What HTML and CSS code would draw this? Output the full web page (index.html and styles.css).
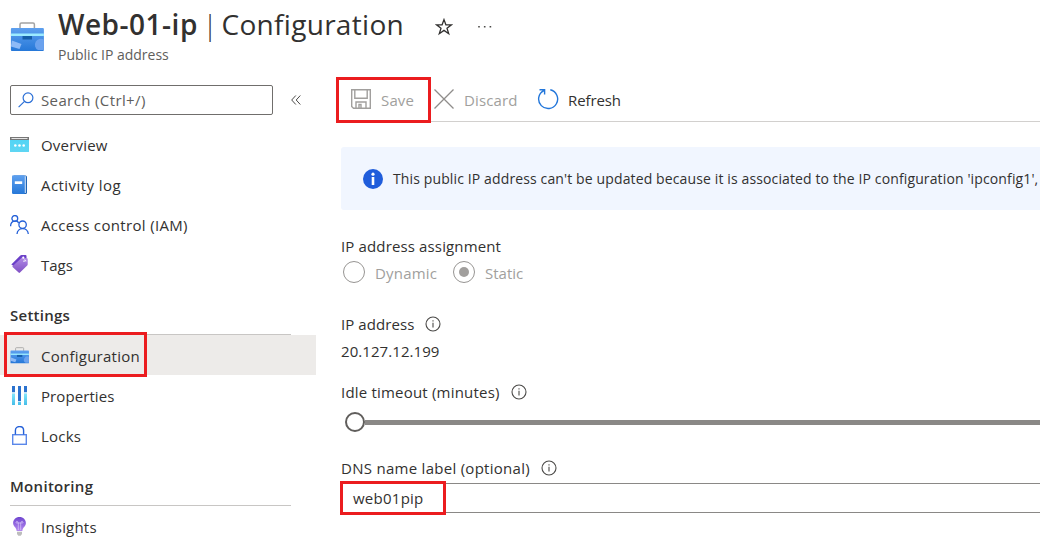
FILE: index.html
```html
<!DOCTYPE html>
<html lang="en">
<head>
<meta charset="utf-8">
<title>Web-01-ip | Configuration</title>
<link rel="stylesheet" href="styles.css">
</head>
<body>
<svg width="0" height="0" class="defs">
  <defs>
    <linearGradient id="blue" x1="0" y1="0" x2="0" y2="1"><stop offset="0" stop-color="#5ea0ef"/><stop offset="1" stop-color="#2678d8"/></linearGradient>
    <linearGradient id="cyan" x1="0" y1="0" x2="0" y2="1"><stop offset="0" stop-color="#50d4f5"/><stop offset="1" stop-color="#5fd6f3"/></linearGradient>
    <linearGradient id="violet" x1="0" y1="0" x2="0" y2="1"><stop offset="0" stop-color="#6f45cf"/><stop offset="1" stop-color="#b58af0"/></linearGradient>
    <linearGradient id="tag" x1="0" y1="0" x2="0" y2="1"><stop offset="0" stop-color="#b08ae6"/><stop offset="1" stop-color="#8050c4"/></linearGradient>
    <linearGradient id="bars" x1="0" y1="0" x2="0" y2="1"><stop offset="0" stop-color="#80e6fb"/><stop offset="1" stop-color="#45bde8"/></linearGradient>
    <symbol id="toolbox" viewBox="0 0 34 30">
      <path d="M10 7V2.400Q10 1 11.400 1H23Q24.400 1 24.400 2.400V7" fill="none" stroke="#a3a3a3" stroke-width="1.500"/>
      <rect x=".9" y="6" width="33" height="23" rx="1" fill="url(#blue)"/>
      <path d="M1.900 18.500L11.500 22L9.500 27L.9 24.500Z" fill="#8ebaf6"/>
      <path d="M33.900 17.500A6 6 0 0 0 28 28H33.900Z" fill="#6ba2ee"/>
      <rect x=".9" y="11.500" width="33" height="2.500" fill="#9cebff"/>
      <rect x="12.500" y="14" width="9.500" height="3.500" fill="#155ea8"/>
    </symbol>
    <symbol id="info" viewBox="0 0 16 16">
      <circle cx="8" cy="8" r="7" fill="none" stroke="#4b4a48" stroke-width="1.100"/>
      <path d="M8 6.700V11.500M8 4.300V5.400" stroke="#4b4a48" stroke-width="1.100"/>
    </symbol>
  </defs>
</svg>
<div class="page">
  <header class="header">
    <svg class="header-icon"><use href="#toolbox"/></svg>
    <div class="titles">
      <div class="title-row">
        <h1 class="title"><b class="name">Web-01-ip</b><span class="bar">|</span><span class="section">Configuration</span></h1>
        <svg class="star" viewBox="0 0 18 18"><path d="M9 1.600L10.900 6.800H16.500L12 10.200L13.700 15.700L9 12.400L4.300 15.700L6 10.200L1.500 6.800H7.100Z" fill="none" stroke="#323130" stroke-width="1.300"/></svg>
        <svg class="more" viewBox="0 0 16 4"><path d="M1.200 1H2.800V2.600H1.200ZM6.900 1H8.500V2.600H6.900ZM12.600 1H14.200V2.600H12.600Z" fill="#4b4a48"/></svg>
      </div>
      <div class="subtitle">Public IP address</div>
    </div>
  </header>
  <div class="body">
    <nav class="sidebar">
      <div class="search-row">
        <div class="search">
          <svg class="search-icon" viewBox="0 0 16 16"><circle cx="10" cy="5.800" r="4.900" fill="none" stroke="#2b6fd6" stroke-width="1.200"/><path d="M6.500 9.300L.6 15.200" stroke="#2b6fd6" stroke-width="1.200"/></svg>
          <span class="t-search">Search (Ctrl+/)</span>
        </div>
        <svg class="collapse" viewBox="0 0 10 10"><path d="M4.800 .5L.7 5L4.800 9.500M9.300 .5L5.200 5L9.300 9.500" fill="none" stroke="#4b4a48"/></svg>
      </div>
      <ul class="menu">
        <li class="item">
          <svg class="icon" viewBox="0 0 19 19"><rect y="2" width="19" height="15" rx=".6" fill="url(#cyan)"/><path d="M0 2H19V5H0Z" fill="#767676"/><path d="M1.500 3H17.500V4H1.500Z" fill="#e4e4e4"/><g fill="#fff"><circle cx="5.300" cy="10.500" r="1.300"/><circle cx="9.500" cy="10.500" r="1.300"/><circle cx="13.700" cy="10.500" r="1.300"/></g></svg>
          <span class="t-overview">Overview</span></li>
        <li class="item">
          <svg class="icon" viewBox="0 0 19 19"><path d="M4 .5H15.500Q17 .5 17 2V17.500Q17 19 15.500 19H4Z" fill="#1f64b5"/><path d="M4 1.200H15.800V18H4Z" fill="#dcecff"/><rect x="2" y=".3" width="12.800" height="18.700" rx="1.200" fill="url(#blue)"/><rect x="4.800" y="6.300" width="7.400" height="2.700" fill="#fff"/></svg>
          <span class="t-activity">Activity log</span></li>
        <li class="item">
          <svg class="icon" viewBox="0 0 19 19"><g fill="none" stroke="#2460d8" stroke-width="1.300"><circle cx="4.800" cy="3.500" r="2.900"/><path d="M.6 11.300C.6 4.900 7.800 4.900 8.500 8.200"/><circle cx="12.600" cy="9.700" r="3.700"/><path d="M7 19C7.400 11.900 17.900 11.900 18.300 19"/></g></svg>
          <span class="t-access">Access control (IAM)</span></li>
        <li class="item">
          <svg class="icon" viewBox="0 0 19 19"><path d="M1.300 9.500L10.300 .4Q10.800 0 11.500 0H15.500Q16.500 0 16.500 1V6L8 14Z" fill="#6a3fc8"/><path d="M2.700 11L12 2.500L17.700 3.500V9.200Q17.700 9.900 17.200 10.400L10 17.600Q9.300 18.300 8.600 17.600L2.600 12Q2 11.500 2.700 11Z" fill="url(#tag)"/><circle cx="13.300" cy="2.700" r="1.100" fill="#fff"/><path d="M14.200 7Q13.200 5.500 14.600 5Q16.300 5 15.900 6.500" fill="none" stroke="#fff"/></svg>
          <span class="t-tags">Tags</span></li>
      </ul>
      <h2 class="group"><span class="t-settings">Settings</span></h2>
      <ul class="menu settings">
        <li class="item selected"><svg class="icon"><use href="#toolbox"/></svg><span class="t-config">Configuration</span><i class="mark mark-config"></i></li>
        <li class="item">
          <svg class="icon" viewBox="0 0 19 19"><path d="M2 0H5V6H2ZM8 0H11V15H8ZM14 0H17V6H14Z" fill="#2b72ce"/><path d="M2 8H5V19H2ZM8 16H11V19H8ZM14 8H17V19H14Z" fill="url(#bars)"/><path d="M2 6H5V8H2ZM8 15H11V16H8ZM14 6H17V8H14Z" fill="#c0e6f8"/></svg>
          <span class="t-props">Properties</span></li>
        <li class="item">
          <svg class="icon" viewBox="0 0 19 19"><rect x="2.700" y="8.700" width="13.600" height="9.600" fill="#fff" stroke="#5b88ea" stroke-width="1.400"/><path d="M5.400 8.500V4.500C5.400-.8 13.600-.8 13.600 4.500V8.500" fill="none" stroke="#2460d8" stroke-width="1.400"/></svg>
          <span class="t-locks">Locks</span></li>
      </ul>
      <h2 class="group"><span class="t-monitor">Monitoring</span></h2>
      <ul class="menu">
        <li class="item">
          <svg class="icon" viewBox="0 0 19 19"><path d="M9.500 0C5.800 0 3.100 2.700 3.100 6.100C3.100 9.800 6.600 10.500 6.600 14H12.400C12.400 10.500 15.900 9.800 15.900 6.100C15.900 2.700 13.200 0 9.500 0Z" fill="url(#violet)"/><path d="M8.300 13V6H6.700Q5.700 6 5.900 5Q6.400 4 7.600 4.600L8.300 6H10.700L11.400 4.600Q12.600 4 13.100 5Q13.300 6 12.300 6H10.700V13" fill="none" stroke="#eadfff" stroke-opacity=".7" stroke-width=".8"/><path d="M7 14.800H12V17L10.700 18.700H8.300L7 17Z" fill="#bdbdbd"/></svg>
          <span class="t-insights">Insights</span></li>
      </ul>
    </nav>
    <main class="main">
      <div class="toolbar">
        <div class="tool save">
          <svg class="i-save" viewBox="0 0 20 20"><path d="M.7.7H19.300V19.300H2.500L.7 17.500ZM3.800 1V9.300H16.200V1M5 19V13H15V19M8 19V15.500H10V19" fill="none" stroke="#a19f9d" stroke-width="1.400"/></svg>
          <span class="t-save">Save</span><i class="mark mark-save"></i>
        </div>
        <div class="tool discard">
          <svg class="i-save" viewBox="0 0 20 20"><path d="M.5.5L19.500 19.500M19.500.5L.5 19.500" stroke="#8f8d8b" stroke-width="1.300"/></svg>
          <span class="t-discard">Discard</span>
        </div>
        <div class="tool refresh">
          <svg class="i-refresh" viewBox="0 0 22 22"><path d="M13.300 .8A9.500 9.500 0 1 1 6.800 1.600M2.500 .7H7.600V5.500" fill="none" stroke="#2276da" stroke-width="1.400"/></svg>
          <span class="t-refresh">Refresh</span>
        </div>
      </div>
      <div class="banner">
        <svg class="i-banner" viewBox="0 0 20 20"><circle cx="10" cy="10" r="10" fill="#205ddb"/><circle cx="10" cy="5.200" r="1.600" fill="#fff"/><path d="M8.700 8H11.300V16H8.700Z" fill="#fff"/></svg>
        <span class="t-banner">This public IP address can't be updated because it is associated to the IP configuration 'ipconfig1',</span>
      </div>
      <form class="form">
        <div class="line l-assign"><span class="t-assign">IP address assignment</span></div>
        <div class="radios">
          <i class="radio"></i><span class="t-dynamic">Dynamic</span>
          <i class="radio checked"></i><span class="t-static">Static</span>
        </div>
        <div class="line l-ip"><span class="t-ip">IP address</span><svg class="info"><use href="#info"/></svg></div>
        <div class="line l-value"><span class="t-value">20.127.12.199</span></div>
        <div class="line l-idle"><span class="t-idle">Idle timeout (minutes)</span><svg class="info"><use href="#info"/></svg></div>
        <div class="slider"><i class="thumb"></i><i class="track"></i></div>
        <div class="line l-dns"><span class="t-dns">DNS name label (optional)</span><svg class="info"><use href="#info"/></svg></div>
        <div class="input"><span class="t-input">web01pip</span><i class="mark mark-input"></i></div>
      </form>
    </main>
  </div>
</div>
</body>
</html>
```
FILE: styles.css
```css
* { box-sizing: border-box; }
body { margin: 0; background: #fff; color: #323130; font: 15px/20px "Open Sans", "Noto Sans", sans-serif; }
h1, h2, ul { margin: 0; padding: 0; font-weight: 400; list-style: none; }
svg { display: block; flex: none; }
span, b { white-space: nowrap; }
.defs { position: absolute; }
.page { width: 1040px; height: 546px; overflow: hidden; display: flex; flex-direction: column; }

.header { height: 77px; flex: none; display: flex; padding-left: 10px; }
.header-icon { width: 34px; height: 30px; margin-top: 22px; }
.titles { margin-left: 14px; }
.title-row { display: flex; height: 45px; }
.title { display: flex; width: 346px; font-size: 28px; line-height: 48px; }
.name { width: 142px; font-weight: 600; letter-spacing: .5px; }
.bar { width: 22px; padding-left: 3px; font-weight: 300; }
.section { letter-spacing: .3px; }
.star { width: 18px; height: 18px; margin: 18px 0 0 31px; }
.more { width: 16px; height: 4px; margin: 25px 0 0 24px; }
.subtitle { color: #605e5c; font-size: 14px; }

.body { flex: 1; display: flex; }
.sidebar { width: 316px; flex: none; }
.search-row { height: 48px; padding: 8px 0 0 10px; display: flex; }
.search { width: 263px; height: 30px; display: flex; align-items: center; padding-left: 7px; border: 1px solid #706e6c; border-radius: 2px; color: #605e5c; }
.search-icon { width: 16px; height: 16px; margin-right: 7px; }
.collapse { width: 10px; height: 10px; margin: 10px 0 0 18px; }
.item { height: 40px; display: flex; align-items: center; padding-left: 10px; position: relative; }
.icon { width: 19px; height: 19px; margin: 0 12px 1px 0; }
.selected { background: #edebe9; }
.group + .menu .icon { margin: 1px 12px 0 0; }
.group + .menu span { padding-top: 2px; }
.settings { margin-bottom: 21px; }
.group { width: 281px; height: 30px; margin: 20px 0 0 10px; font-size: 15px; font-weight: 600; border-bottom: 1px solid #c8c6c4; line-height: 20px; }

.t-search { letter-spacing: .38px; }
.t-overview { letter-spacing: .2px; }
.t-activity { letter-spacing: .43px; }
.t-access { letter-spacing: .34px; }
.t-settings { letter-spacing: .25px; }
.t-config { letter-spacing: .25px; }
.t-props { letter-spacing: .08px; }
.t-locks { letter-spacing: .2px; }
.t-monitor { letter-spacing: .3px; }
.t-insights { letter-spacing: .2px; }
.t-save, .t-discard { letter-spacing: .15px; }
.t-refresh { letter-spacing: -.1px; }
.t-banner { letter-spacing: .125px; }
.t-assign { letter-spacing: .14px; }
.t-dynamic { letter-spacing: .2px; }
.t-ip, .t-value { letter-spacing: .07px; }
.t-idle { letter-spacing: .2px; }
.t-dns { letter-spacing: .28px; }
.t-input { letter-spacing: .25px; }

.mark { position: absolute; border: 3px solid #eb1c1f; pointer-events: none; }
.mark-config { left: 4px; top: -3px; width: 143px; height: 45px; }
.mark-save { left: -5px; top: 0; width: 95px; height: 46px; }
.mark-input { left: -2px; top: -3px; width: 106px; height: 34px; }

.main { flex: 1; min-width: 0; padding-left: 25px; }
.toolbar { height: 45px; display: flex; border-bottom: 1px solid #d2d0ce; }
.tool { position: relative; display: flex; align-items: center; height: 45px; color: #a19f9d; }
.save { width: 93px; padding-left: 10px; }
.i-save { width: 20px; height: 20px; margin: 0 10px 1px 0; }
.discard { width: 103px; }
.refresh { color: #323130; }
.i-refresh { width: 22px; height: 22px; margin-right: 9px; }
.banner { height: 63px; margin-top: 25px; padding-left: 22px; display: flex; align-items: center; background: #f1f6ff; border-radius: 3px 0 0 3px; font-size: 14px; }
.i-banner { width: 20px; height: 20px; margin-right: 10px; }
.form { display: flex; flex-direction: column; }
.line { display: flex; align-items: center; height: 20px; flex: none; }
.l-assign { margin-top: 26px; }
.radios { display: flex; align-items: center; height: 24px; margin-top: 4px; color: #a19f9d; }
.radios span { padding-top: 2px; }
.t-dynamic { width: 76px; }
.radio { width: 22px; height: 22px; margin: 0 10px 0 2px; border: 1px solid #979593; border-radius: 50%; display: grid; place-items: center; }
.checked::after { content: ""; width: 10px; height: 10px; border-radius: 50%; background: #a19f9d; }
.l-ip { margin-top: 30px; }
.l-value { margin-top: 7px; }
.l-idle { margin-top: 21px; }
.info { width: 16px; height: 16px; margin-left: 11px; }
.slider { height: 20px; margin-top: 10px; padding-left: 4px; display: flex; align-items: center; }
.thumb { width: 20px; height: 20px; border: 2px solid #605e5c; border-radius: 50%; }
.track { flex: 1; height: 5px; background: #8a8886; }
.l-dns { margin-top: 26px; }
.input { position: relative; height: 30px; margin-top: 5px; padding-left: 11px; display: flex; align-items: center; border: solid #8a8886; border-width: 1px 0 1px 1px; }
```
